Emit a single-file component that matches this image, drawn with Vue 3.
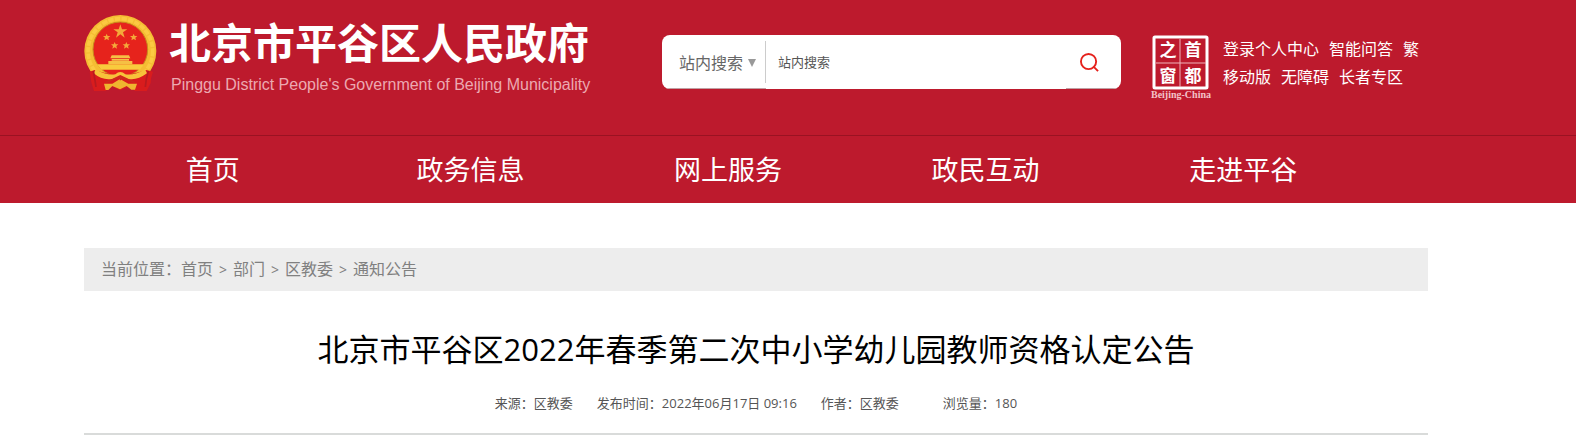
<script setup>
import { ref } from 'vue'

const scope = ref('site')
const keyword = ref('站内搜索')

const toolLinks = [
  ['登录个人中心', '智能问答', '繁'],
  ['移动版', '无障碍', '长者专区']
]
const navList = ['首页', '政务信息', '网上服务', '政民互动', '走进平谷']
const crumbs = ['首页', '部门', '区教委', '通知公告']
</script>

<template>
  <div class="page">
    <header class="header">
      <div class="wrap top">
        <a class="brand" href="#">
          <svg class="emblem" viewBox="0 0 219 228" aria-hidden="true">
            <circle cx="109" cy="108" r="108" fill="#f5bd33" />
            <circle cx="109" cy="108" r="97" fill="none" stroke="#fbca42" stroke-width="11" stroke-dasharray="16 4" />
            <circle cx="109" cy="103" r="82" fill="#e6231c" stroke="#c98a1d" stroke-width="3" />
            <path d="M109 28l5 15h16l-13 9 5 16-13-10-13 10 5-16-13-9h16z" fill="#f4a83a" />
            <path d="M68 56l3 7h8l-6 5 2 8-7-4-7 4 2-8-6-5h8z" fill="#f4a83a" />
            <path d="M149 56l3 7h8l-6 5 2 8-7-4-7 4 2-8-6-5h8z" fill="#f4a83a" />
            <path d="M92 81l3 7h8l-6 5 2 8-7-4-7 4 2-8-6-5h8z" fill="#f4a83a" />
            <path d="M127 81l3 7h8l-6 5 2 8-7-4-7 4 2-8-6-5h8z" fill="#f4a83a" />
            <path d="M83 121h52l4 9h-60zM83 132h52v5h-52zM73 138h72v10h-72z" fill="#f6c044" />
            <path d="M39 148h141l-12 16h-116z" fill="#f9cb3d" />
            <path d="M32 165q77 28 155 0l20 5q-7 18-7 34l-12 24h-35l-14-16-30 14-30-14-14 16h-35l-8-26-5-32z" fill="#d91c1d" />
            <path d="M35 163q32 19 59 15 15-14 30 0 28 4 59-15l6 12q-30 22-55 17l-25-12-25 12q-29 5-55-17z" fill="#f7c23a" />
            <path d="M60 206h25l23-14 25 14h26l-6 18h-11l-14-11-20 10-23-10-12 12h-8z" fill="#efb52f" />
            <path d="M65 202l43-16 45 16M109 186v10" fill="none" stroke="#c9301c" stroke-width="4" />
            <path d="M28 168q6 32 8 48M193 168q-8 26-9 48" fill="none" stroke="#b81a20" stroke-width="5" />
          </svg>
          <span class="brandText">
            <strong>北京市平谷区人民政府</strong>
            <small>Pinggu District People's Government of Beijing Municipality</small>
          </span>
        </a>

        <form class="search" @submit.prevent>
          <div class="scope">
            <select v-model="scope" aria-label="搜索范围">
              <option value="site">站内搜索</option>
            </select>
            <svg class="arrow" viewBox="0 0 8 8" aria-hidden="true">
              <path d="M0 0h8L4 8z" fill="#999" />
            </svg>
          </div>
          <input v-model="keyword" type="text" aria-label="搜索关键词" />
          <button type="submit" aria-label="搜索">
            <svg viewBox="0 0 20 20" aria-hidden="true">
              <circle cx="9" cy="9" r="8" />
              <path d="M14 14l5 5" />
            </svg>
          </button>
        </form>

        <div class="tools">
          <a class="seal" href="#" aria-label="首都之窗">
            <svg viewBox="0 0 62 66">
              <rect x="4" y="2" width="53" height="51" rx="1" fill="none" stroke="#fff" stroke-width="3" />
              <path d="M30 4v48M6 28h50" stroke="#f0b4bb" stroke-width="1" />
              <g class="sealText">
                <text x="18" y="21">之</text>
                <text x="43" y="21">首</text>
                <text x="18" y="47">窗</text>
                <text x="43" y="47">都</text>
              </g>
              <text class="sealName" x="31" y="63">Beijing-China</text>
            </svg>
          </a>
          <div class="links">
            <div v-for="(row, i) of toolLinks" :key="i" class="linkRow">
              <a v-for="item of row" :key="item" href="#">{{ item }}</a>
            </div>
          </div>
        </div>
      </div>

      <nav class="navBar">
        <div class="wrap">
          <ul class="nav">
            <li v-for="item of navList" :key="item">
              <a href="#">{{ item }}</a>
            </li>
          </ul>
        </div>
      </nav>
    </header>

    <main class="wrap">
      <div class="crumbs">
        <span>当前位置：</span>
        <template v-for="(item, idx) of crumbs" :key="item">
          <span v-if="idx > 0" class="sep">&gt;</span>
          <a href="#">{{ item }}</a>
        </template>
      </div>

      <article>
        <h1>北京市平谷区2022年春季第二次中小学幼儿园教师资格认定公告</h1>
        <div class="meta">
          <span>来源：区教委</span>
          <span>发布时间：2022年06月17日 09:16</span>
          <span>作者：区教委</span>
          <span class="views">浏览量：180</span>
        </div>
      </article>
    </main>
  </div>
</template>

<style>
body {
  margin: 0;
  background: #fff;
}
</style>

<style scoped>
.page {
  font-family: 'Open Sans', 'Noto Sans CJK SC', sans-serif;
}

.page a {
  color: inherit;
  text-decoration: none;
}

.wrap {
  margin: 0 148px 0 84px;
}

.header {
  background: #bd1a2d;
  color: #fff;
}

.top {
  display: flex;
  align-items: flex-start;
  height: 135px;
}

.page .brand {
  display: flex;
  flex: 1;
  gap: 12px;
  padding-top: 15px;
}

.emblem {
  width: 73px;
  height: 76px;
  flex: none;
}

.brandText {
  display: flex;
  flex-direction: column;
  white-space: nowrap;
}

.brandText strong {
  font-size: 42px;
  line-height: 56px;
  font-weight: 700;
}

.brandText small {
  padding-left: 2px;
  font-family: 'Liberation Sans', sans-serif;
  font-size: 16px;
  line-height: 28px;
  color: #eca9b1;
}

.search {
  display: flex;
  width: 459px;
  height: 54px;
  margin: 35px 29px 0 0;
  overflow: hidden;
  border-radius: 8px;
  background: #fff;
}

.scope {
  position: relative;
  display: flex;
  align-items: center;
  width: 104px;
  box-shadow: inset 0 -1px #c0a0a4;
}

.scope select {
  appearance: none;
  width: 100%;
  height: 42px;
  padding: 0 0 0 17px;
  border: none;
  border-right: 1px solid #ccc;
  background: transparent;
  color: #666;
  font: 16px 'Noto Sans CJK SC', sans-serif;
}

.arrow {
  position: absolute;
  top: 24px;
  right: 10px;
  width: 8px;
  height: 8px;
  pointer-events: none;
}

.search input {
  flex: 1;
  min-width: 0;
  padding: 0 12px 2px;
  border: none;
  outline: none;
  color: #555;
  font: 13px 'Noto Sans CJK SC', sans-serif;
}

.search button {
  display: flex;
  align-items: center;
  width: 55px;
  padding: 0 0 0 14px;
  border: none;
  background: transparent;
  box-shadow: inset 0 -1px #c0a0a4;
  cursor: pointer;
}

.search button svg {
  width: 19px;
  height: 19px;
  fill: none;
  stroke: #e5211c;
  stroke-width: 2;
}

.tools {
  display: flex;
  gap: 11px;
  width: 278px;
  padding-top: 35px;
}

.seal svg {
  display: block;
  width: 62px;
  height: 66px;
}

.sealText {
  fill: #fff;
  font: 700 17px 'Noto Sans CJK SC', sans-serif;
  text-anchor: middle;
}

.sealName {
  fill: #f3c3c9;
  font: 700 10px 'Liberation Serif', serif;
  text-anchor: middle;
}

.links {
  font-size: 16px;
  line-height: 28px;
  white-space: nowrap;
}

.linkRow {
  display: flex;
  gap: 10px;
}

.navBar {
  border-top: 1px solid #9a1222;
}

.nav {
  display: grid;
  grid-template-columns: repeat(5, 1fr);
  margin: 0;
  padding: 0 56px 0 0;
  list-style: none;
  text-align: center;
  font-size: 27px;
  line-height: 67px;
}

.crumbs {
  display: flex;
  margin-top: 45px;
  padding: 0 17px;
  background: #ededed;
  color: #808080;
  font-size: 16px;
  line-height: 43px;
}

.sep {
  padding: 0 6px;
  font-size: 14px;
}

article {
  border-bottom: 2px solid #d9dbda;
  text-align: center;
}

h1 {
  margin: 0;
  padding-top: 35px;
  color: #000;
  font-size: 31px;
  font-weight: 400;
  line-height: 46px;
}

.meta {
  display: flex;
  justify-content: center;
  gap: 24px;
  padding: 21px 0 20px;
  color: #555;
  font-size: 13px;
  line-height: 20px;
}

.views {
  padding-left: 20px;
}
</style>
